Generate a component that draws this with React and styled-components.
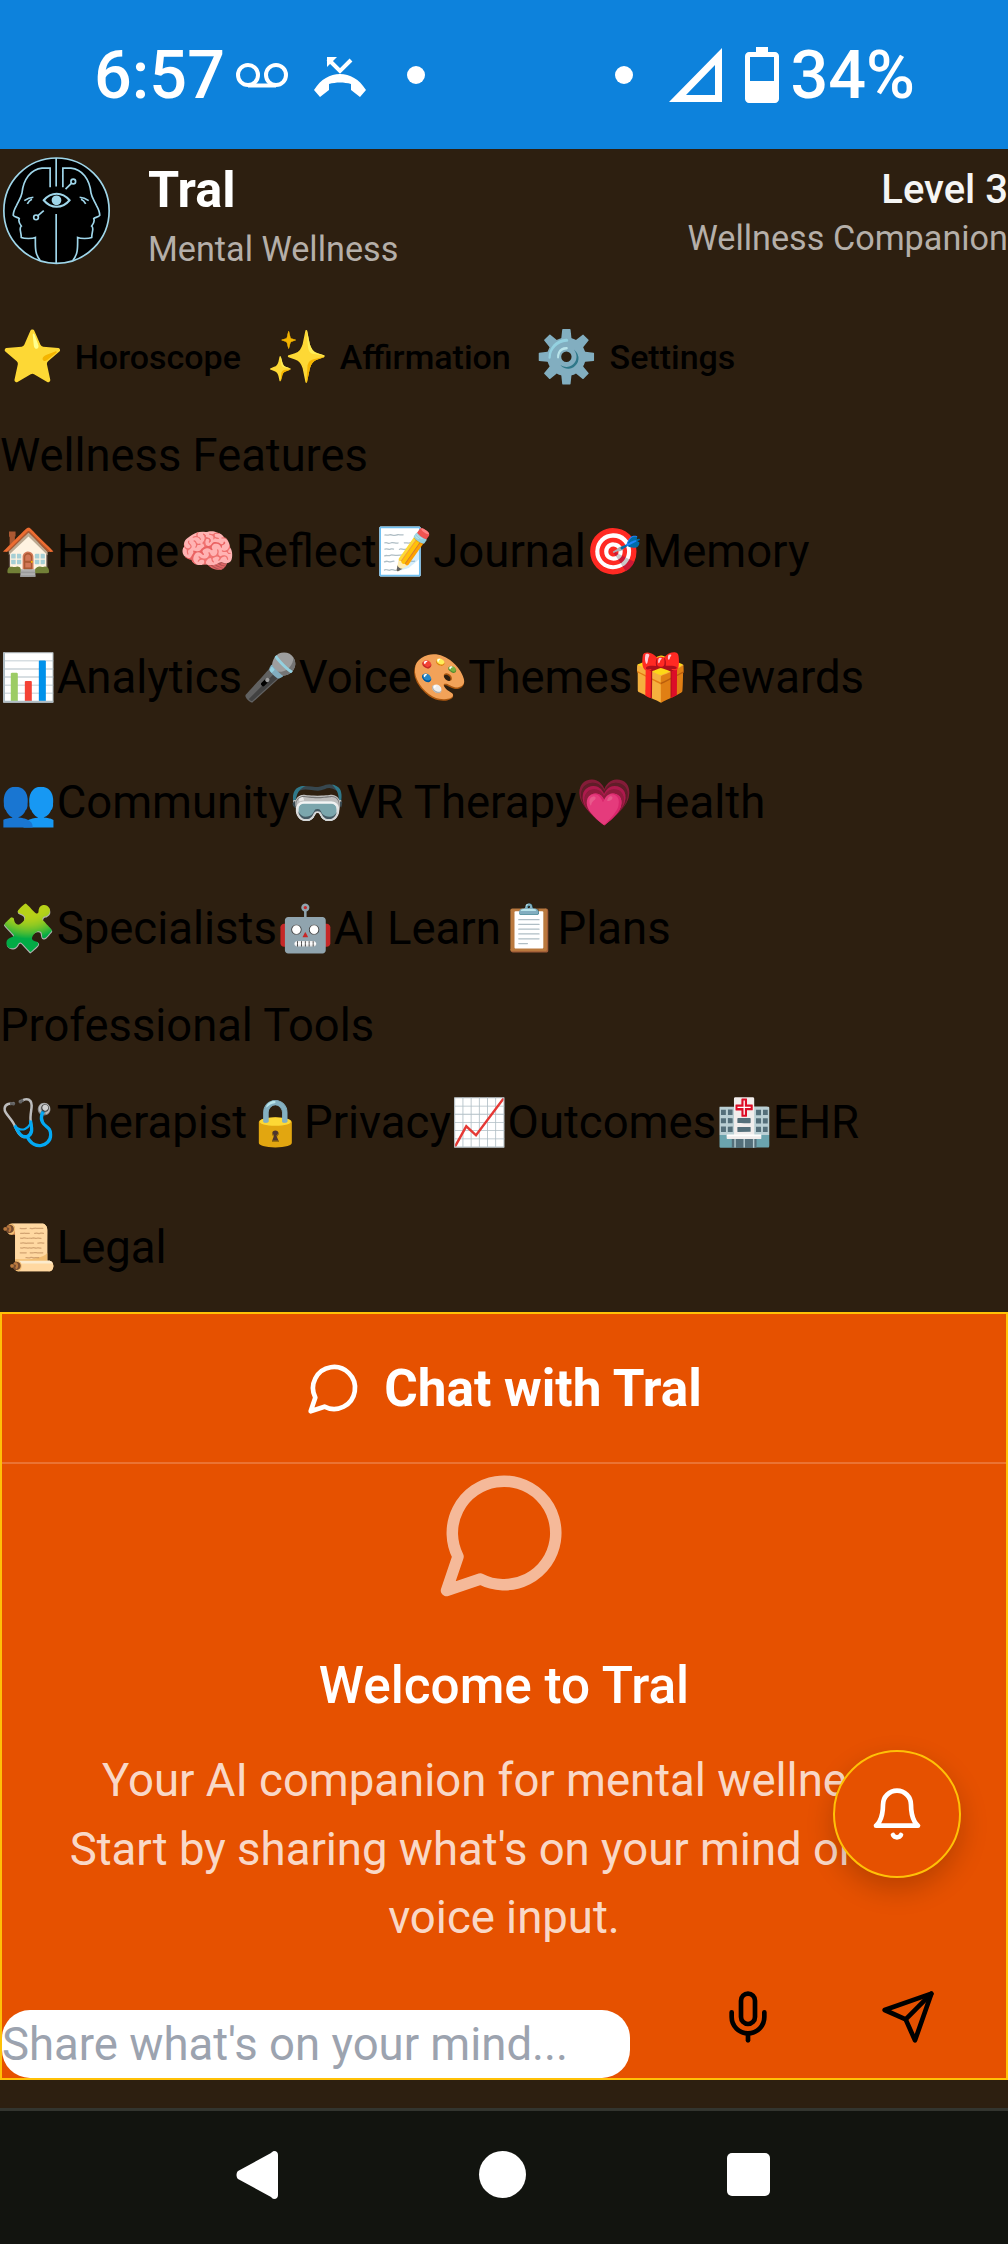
import React from "react";
import styled, { createGlobalStyle } from "styled-components";

const GlobalStyle = createGlobalStyle`
  html, body {
    margin: 0;
    padding: 0;
    background: #2d1f10;
  }
  * {
    box-sizing: border-box;
  }
`;

const wellnessItems = [
  ["🏠", "Home"],
  ["🧠", "Reflect"],
  ["📝", "Journal"],
  ["🎯", "Memory"],
  ["📊", "Analytics"],
  ["🎤", "Voice"],
  ["🎨", "Themes"],
  ["🎁", "Rewards"],
  ["👥", "Community"],
  ["🥽", "VR Therapy"],
  ["💗", "Health"],
  ["🧩", "Specialists"],
  ["🤖", "AI Learn"],
  ["📋", "Plans"],
];

const proItems = [
  ["🩺", "Therapist"],
  ["🔒", "Privacy"],
  ["📈", "Outcomes"],
  ["🏥", "EHR"],
  ["📜", "Legal"],
];

const quickItems = [
  ["⭐", "Horoscope"],
  ["✨", "Affirmation"],
  ["⚙️", "Settings"],
];

// line icons, same 24 box as lucide but the older shapes
const Icon = ({ size = 56, color = "#fff", children }) => (
  <svg
    width={size}
    height={size}
    viewBox="0 0 24 24"
    fill="none"
    stroke={color}
    strokeWidth="2"
    strokeLinecap="round"
    strokeLinejoin="round"
  >
    {children}
  </svg>
);

const ChatBubble = (props) => (
  <Icon {...props}>
    <path d="M7.9 20A9 9 0 1 0 4 16.1L2 22Z" />
  </Icon>
);

const BellIcon = (props) => (
  <Icon {...props}>
    <path d="M6 8a6 6 0 0 1 12 0c0 7 3 9 3 9H3s3-2 3-9" />
    <path d="M10.3 21a1.94 1.94 0 0 0 3.4 0" />
  </Icon>
);

const MicIcon = (props) => (
  <Icon {...props}>
    <path d="M12 2a3 3 0 0 0-3 3v7a3 3 0 0 0 6 0V5a3 3 0 0 0-3-3Z" />
    <path d="M19 10v2a7 7 0 0 1-14 0v-2" />
    <path d="M12 19v3" />
  </Icon>
);

const SendIcon = (props) => (
  <Icon {...props}>
    <path d="m22 2-7 20-4-9-9-4Z" />
    <path d="M22 2 11 13" />
  </Icon>
);

const faceLine =
  "M152 142V85H128C95 88 72 118 68 160C66 172 60 180 52 196C47 205 42 222 42 226C46 232 58 232 60 236C56 244 60 250 66 258C58 264 66 274 66 292C75 296 100 296 108 292C108 320 106 340 122 360";
const browLine = "M75 182C84 176 92 173 102 172M84 192C88 184 92 180 98 178";

const Logo = () => (
  <svg width="107" height="108" viewBox="12 52 318 322" fill="none" stroke="#9fd6ea" strokeWidth="5">
    <circle cx="171" cy="212" r="157" fill="#000" />
    <path d="M170 55V140M170 222V370" />
    <path d={faceLine} />
    <path d={browLine} />
    <path d="M133 212L114 228" />
    <circle cx="110" cy="232" r="7" />
    <g transform="matrix(-1 0 0 1 342 0)">
      <path d={faceLine} />
      <path d={browLine} />
    </g>
    <path d="M198 148L216 130" />
    <circle cx="221" cy="125" r="7" />
    <path d="M133 181C155 155 188 155 210 181C188 207 155 207 133 181Z" strokeWidth="6" />
    <circle cx="171" cy="181" r="12" fill="#9fd6ea" />
  </svg>
);

const StatusBar = () => (
  <Status>
    <StatusGroup>
      <StatusText>6:57</StatusText>
      <Glyph $left={11}>
        <svg width="52" height="26" viewBox="0 0 52 26" fill="none" stroke="#fff" strokeWidth="4">
          <circle cx="12" cy="13" r="10" />
          <circle cx="40" cy="13" r="10" />
          <path d="M12 23.5H40" />
        </svg>
      </Glyph>
      <Glyph $left={25} $top={4}>
        <svg width="54" height="40" viewBox="0 0 54 40" fill="#fff">
          <path d="M1 33C8 22 17 17 27 17C37 17 46 22 53 33L47 40L38 33V27C31 25 23 25 16 27V33L7 40Z" />
          <path d="M15 2L27 14L38 3" fill="none" stroke="#fff" strokeWidth="4" />
          <path d="M14 0H24L14 10Z" />
        </svg>
      </Glyph>
      <Dot $left={40} />
    </StatusGroup>
    <StatusGroup>
      <Dot />
      <Glyph $left={36}>
        <svg width="54" height="54" viewBox="0 0 54 54" fill="#fff" fillRule="evenodd">
          <path d="M53 0V54H0ZM46 17L17 47H46Z" />
        </svg>
      </Glyph>
      <Glyph $left={22}>
        <svg width="34" height="56" viewBox="0 0 34 56" fill="#fff" fillRule="evenodd">
          <path d="M11 0H23V5H30C32 5 34 7 34 9V52C34 54 32 56 30 56H4C2 56 0 54 0 52V9C0 7 2 5 4 5H11ZM5 10V34H29V10Z" />
        </svg>
      </Glyph>
      <Glyph $left={11}>
        <StatusText>34%</StatusText>
      </Glyph>
    </StatusGroup>
  </Status>
);

const NavItem = ({ emoji, label }) => (
  <Item>
    <span>{emoji}</span>
    <span>{label}</span>
  </Item>
);

export default function App() {
  return (
    <Screen>
      <GlobalStyle />
      <StatusBar />
      <Main>
        <Header>
          <Brand>
            <Logo />
            <BrandText>
              <Title>Tral</Title>
              <Subtitle $top={8}>Mental Wellness</Subtitle>
            </BrandText>
          </Brand>
          <LevelBlock>
            <Level>Level 3</Level>
            <Subtitle $top={2}>Wellness Companion</Subtitle>
          </LevelBlock>
        </Header>

        <QuickRow>
          {quickItems.map(([emoji, label]) => (
            <QuickItem key={label}>
              <QuickEmoji>{emoji}</QuickEmoji>
              <span>{label}</span>
            </QuickItem>
          ))}
        </QuickRow>

        <SectionTitle $top={4}>Wellness Features</SectionTitle>
        <ItemGrid>
          {wellnessItems.map(([emoji, label]) => (
            <NavItem key={label} emoji={emoji} label={label} />
          ))}
        </ItemGrid>

        <SectionTitle $top={1}>Professional Tools</SectionTitle>
        <ItemGrid>
          {proItems.map(([emoji, label]) => (
            <NavItem key={label} emoji={emoji} label={label} />
          ))}
        </ItemGrid>

        <ChatPanel>
          <ChatHeader>
            <ChatBubble size={56} />
            <ChatTitle>Chat with Tral</ChatTitle>
          </ChatHeader>
          <ChatBody>
            <BigIcon>
              <ChatBubble size={138} />
            </BigIcon>
            <Welcome>Welcome to Tral</Welcome>
            <Intro>
              Your AI companion for mental wellness.
              <br />
              Start by sharing what's on your mind or use
              <br />
              voice input.
            </Intro>
          </ChatBody>
          <InputRow>
            <ChatInput placeholder="Share what's on your mind..." />
            <MicButton>
              <MicIcon size={56} color="#000" />
            </MicButton>
            <IconButton>
              <SendIcon size={56} color="#000" />
            </IconButton>
          </InputRow>
          <Fab>
            <BellIcon size={56} />
          </Fab>
        </ChatPanel>
      </Main>
      <BottomNav>
        <svg width="42" height="48" viewBox="0 0 42 48" fill="#fff">
          <path d="M38 0C41 0 42 2 42 4V44C42 46 41 48 38 48C37 48 36 47 35 46L2 28C0 26 0 22 2 20L35 2C36 1 37 0 38 0Z" />
        </svg>
        <HomeDot />
        <RecentSquare />
      </BottomNav>
    </Screen>
  );
}

const Screen = styled.div`
  width: 1008px;
  height: 2244px;
  display: flex;
  flex-direction: column;
  overflow: hidden;
  font-family: Roboto, "Noto Color Emoji", sans-serif;
  color: #000;
`;

const Status = styled.div`
  height: 149px;
  flex: none;
  background: #0d82dc;
  display: flex;
  align-items: center;
  justify-content: space-between;
  padding: 0 93px 0 94px;
`;

const StatusGroup = styled.div`
  display: flex;
  align-items: center;
`;

const Glyph = styled.span`
  display: flex;
  margin-left: ${(p) => p.$left || 0}px;
  margin-top: ${(p) => p.$top || 0}px;
`;

const StatusText = styled.span`
  color: #fff;
  font-size: 66.5px;
  font-weight: 500;
  line-height: 76px;
`;

const Dot = styled.span`
  width: 18px;
  height: 18px;
  border-radius: 50%;
  background: #fff;
  margin-left: ${(p) => p.$left || 0}px;
`;

const Main = styled.div`
  flex: 1;
  background: #2d1f10;
  display: flex;
  flex-direction: column;
  position: relative;
`;

const Header = styled.div`
  display: flex;
  justify-content: space-between;
  padding: 8px 0 0 3px;
`;

const Brand = styled.div`
  display: flex;
  gap: 38px;
`;

const BrandText = styled.div`
  display: flex;
  flex-direction: column;
`;

const Title = styled.div`
  color: #fff;
  font-size: 50.4px;
  font-weight: 700;
  line-height: 56px;
  margin-top: 5px;
`;

const Subtitle = styled.div`
  color: #b5afa9;
  font-size: 34.2px;
  line-height: 47px;
  margin-top: ${(p) => p.$top}px;
`;

const LevelBlock = styled.div`
  text-align: right;
`;

const Level = styled.div`
  color: #f5f5f4;
  font-size: 40px;
  font-weight: 500;
  line-height: 47px;
  margin-top: 9px;
`;

const QuickRow = styled.div`
  display: flex;
  gap: 25px;
  padding: 50px 0 0 1px;
  height: 145px;
`;

const QuickItem = styled.div`
  display: flex;
  align-items: center;
  gap: 11px;
  font-size: 34px;
  font-weight: 500;
  height: 67px;
`;

const QuickEmoji = styled.span`
  font-size: 50.4px;
  line-height: 67px;
`;

const SectionTitle = styled.div`
  font-size: 45.3px;
  line-height: 67px;
  margin-top: ${(p) => p.$top}px;
`;

const ItemGrid = styled.div`
  display: flex;
  flex-wrap: wrap;
`;

const Item = styled.div`
  display: flex;
  align-items: center;
  height: 125.6px;
  font-size: 45.5px;
`;

const ChatPanel = styled.div`
  position: absolute;
  left: 0;
  right: 0;
  top: 1163px;
  height: 768px;
  background: #e65100;
  border: 2px solid #ffc107;
  display: flex;
  flex-direction: column;
`;

const ChatHeader = styled.div`
  height: 150px;
  flex: none;
  border-bottom: 2px solid rgba(255, 255, 255, 0.2);
  display: flex;
  align-items: center;
  justify-content: center;
  gap: 22px;
`;

const ChatTitle = styled.span`
  color: #fff;
  font-size: 51.3px;
  font-weight: 700;
`;

const ChatBody = styled.div`
  flex: 1;
  display: flex;
  flex-direction: column;
  align-items: center;
`;

const BigIcon = styled.div`
  opacity: 0.6;
  height: 138px;
`;

const Welcome = styled.div`
  color: #fff;
  font-size: 51.3px;
  font-weight: 500;
  line-height: 67px;
  margin-top: 50px;
`;

const Intro = styled.div`
  color: rgba(255, 255, 255, 0.8);
  font-size: 45.5px;
  line-height: 68.5px;
  text-align: center;
  margin-top: 28px;
`;

const InputRow = styled.div`
  display: flex;
  align-items: flex-end;
  height: 92px;
`;

const ChatInput = styled.input`
  width: 628px;
  height: 68px;
  border: none;
  outline: none;
  padding: 0;
  border-radius: 28px;
  background: #fff;
  font-family: Roboto, sans-serif;
  font-size: 45.5px;
  &::placeholder {
    color: #9ca3af;
  }
`;

const IconButton = styled.button`
  width: 160px;
  height: 92px;
  padding: 0 0 30px;
  border: none;
  background: none;
  display: flex;
  align-items: center;
  justify-content: center;
`;

const MicButton = styled(IconButton)`
  margin-left: 38px;
`;

const Fab = styled.div`
  position: absolute;
  left: 831px;
  top: 436px;
  width: 128px;
  height: 128px;
  border-radius: 50%;
  background: #e65100;
  border: 2.8px solid #ffc107;
  box-shadow: 0 11px 28px rgba(0, 0, 0, 0.2);
  display: flex;
  align-items: center;
  justify-content: center;
`;

const BottomNav = styled.div`
  height: 136px;
  flex: none;
  background: #12140f;
  border-top: 3px solid #33352f;
  display: flex;
  align-items: center;
  padding: 0 238px 6px 236px;
  justify-content: space-between;
`;

const HomeDot = styled.span`
  width: 47px;
  height: 47px;
  border-radius: 50%;
  background: #fff;
`;

const RecentSquare = styled.span`
  width: 43px;
  height: 43px;
  border-radius: 5px;
  background: #fff;
`;
